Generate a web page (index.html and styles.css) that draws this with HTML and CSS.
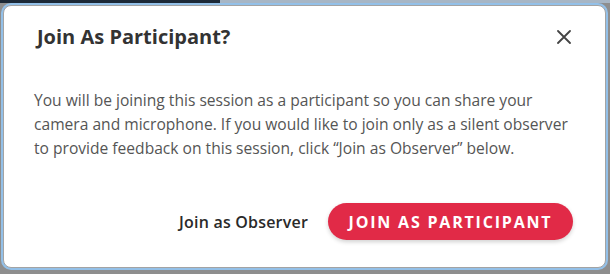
FILE: index.html
```html
<!DOCTYPE html>
<html>
<head>
<meta charset="utf-8">
<link rel="stylesheet" href="styles.css">
</head>
<body>
<div class="dialog">
  <div class="header">
    <h2 class="title">Join As Participant?</h2>
    <button class="close" aria-label="Close">
      <svg width="14" height="14" viewBox="0 0 14 14"><path d="M1 1L13 13M13 1L1 13" stroke="#444" stroke-width="1.8" stroke-linecap="round"/></svg>
    </button>
  </div>
  <p class="text">You will be joining this session as a participant so you can share your camera and microphone. If you would like to join only as a silent observer to provide feedback on this session, click “Join as Observer” below.</p>
  <div class="actions">
    <button class="observer">Join as Observer</button>
    <button class="primary">JOIN AS PARTICIPANT</button>
  </div>
</div>
</body>
</html>
```
FILE: styles.css
```css
html, body {
  margin: 0;
  padding: 0;
}
body {
  width: 610px;
  height: 274px;
  overflow: hidden;
  background: linear-gradient(to right, #1c2937 220px, #a7b6c5 220px) top left / 100% 3px no-repeat, #8e8e8e;
  font-family: "Open Sans", Lato, sans-serif;
}
.dialog {
  box-sizing: border-box;
  margin: 5px 0 0 3px;
  width: 603px;
  height: 263px;
  background: #fff;
  border: 1px solid #a3a3a3;
  border-radius: 8px;
  box-shadow: 0 0 0 2px #93c0e8;
  padding: 0 32px 0 33px;
}
.header {
  display: flex;
  justify-content: space-between;
  align-items: center;
  padding-top: 19px;
}
.title {
  margin: 0;
  font-size: 20px;
  line-height: 24px;
  font-weight: 700;
  color: #333;
}
.close {
  border: 0;
  background: none;
  padding: 0;
  width: 14px;
  height: 14px;
  display: flex;
  margin-right: 2px;
}
.text {
  margin: 39px 0 0 -3px;
  width: 540px;
  font-size: 15.6px;
  line-height: 24px;
  color: #555;
}
.actions {
  display: flex;
  justify-content: flex-end;
  align-items: center;
  gap: 20px;
  margin-top: 43px;
}
.observer {
  border: 0;
  background: none;
  padding: 0;
  font-family: inherit;
  font-size: 16px;
  font-weight: 600;
  letter-spacing: 0.2px;
  color: #2a2a2a;
}
.primary {
  border: 0;
  height: 37px;
  width: 245px;
  border-radius: 19px;
  background: #e12a47;
  color: #fff;
  font-family: inherit;
  font-size: 16px;
  font-weight: 700;
  letter-spacing: 1.8px;
  box-shadow: 0 2px 4px rgba(0,0,0,0.18);
}
```
